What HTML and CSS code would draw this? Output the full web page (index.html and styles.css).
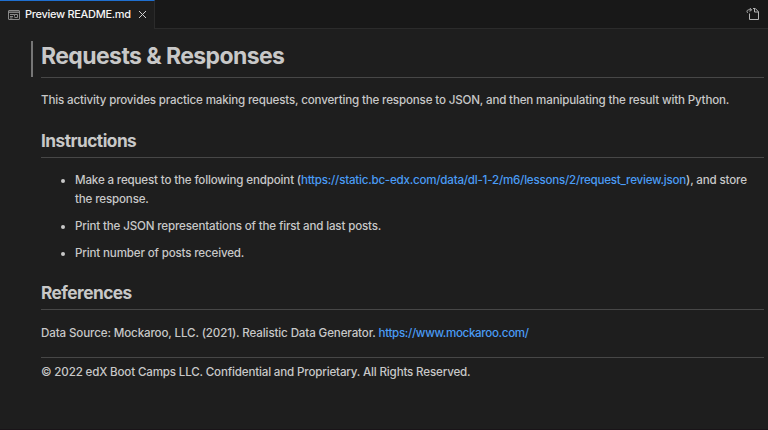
FILE: index.html
```html
<!DOCTYPE html>
<html lang="en">
<head>
<meta charset="utf-8">
<title>Preview README.md</title>
<link rel="stylesheet" href="styles.css">
</head>
<body>
<header class="tabs">
  <div class="tab">
    <svg class="tab-icon" width="12" height="12" viewBox="0 0 12 12" fill="none" stroke="#8a8a8a"><rect x=".5" y="1.5" width="11" height="9" rx=".5"/><path d="M1 3.2h10" stroke-width="1.4"/><path d="M2 5.5H6.5M2 7.5H5M2 9H4.5M6.5 7.5V5.5H9.5V8.5H6.5"/></svg>
    <span class="tab-title">Preview README.md</span>
    <svg class="close" width="9" height="9" viewBox="0 0 9 9" fill="none" stroke="#d0d0d0"><path d="M1 1l7 7M8 1L1 8"/></svg>
  </div>
  <div class="actions">
    <svg width="14" height="14" viewBox="0 0 14 14" fill="none" stroke="#b4b4b4"><path d="M3.5 6.5V12.5H12.5V4.8L9.3 1.5H7M8.5 1.5V5H12.5M1.8 6C.2 4.2 1.2 2.8 3 2.8H5.4M3.8 1L5.6 2.8 3.8 4.6"/></svg>
  </div>
</header>
<main class="preview">
  <h1>Requests &amp; Responses</h1>
  <p class="intro">This activity provides practice making requests, converting the response to JSON, and then manipulating the result with Python.</p>
  <h2>Instructions</h2>
  <ul>
    <li>Make a request to the following endpoint (<a>https://static.bc-edx.com/data/dl-1-2/m6/lessons/2/request_review.json</a>), and store<br>the response.</li>
    <li>Print the JSON representations of the first and last posts.</li>
    <li>Print number of posts received.</li>
  </ul>
  <h2 class="references">References</h2>
  <p class="source">Data Source: Mockaroo, LLC. (2021). Realistic Data Generator. <a>https://www.mockaroo.com/</a></p>
  <hr>
  <p class="copyright">© 2022 edX Boot Camps LLC. Confidential and Proprietary. All Rights Reserved.</p>
</main>
</body>
</html>
```
FILE: styles.css
```css
* { box-sizing: border-box; }
body {
  margin: 0;
  height: 430px;
  overflow: hidden;
  background: #1e1e1e;
  border-bottom: 1px solid #191418;
  color: #c8c8c8;
  font: 500 11.6px/19px Inter, sans-serif;
  letter-spacing: -0.165px;
}
.tabs {
  display: flex;
  height: 29px;
  background: #181818;
}
.tab {
  display: flex;
  align-items: center;
  width: 155px;
  padding: 0 0 1px 8px;
  background: #1e1e1e;
  border-top: 1px solid #1f6fd0;
  border-right: 1px solid #2b2b2b;
}
.tab-title {
  width: 106px;
  margin: 0 7px 0 5px;
  color: #f5f5f5;
  font-size: 11px;
  letter-spacing: -0.3px;
  white-space: nowrap;
}
.actions {
  flex: 1;
  display: flex;
  justify-content: flex-end;
  align-items: center;
  padding-right: 8px;
  border-bottom: 1px solid #2b2b2b;
}
.preview { padding: 12px 4px 0 41px; white-space: nowrap; }
h1, h2, p, ul { margin: 0; }
h1 {
  height: 36px;
  margin-left: -10px;
  padding-left: 8px;
  border-left: 2px solid #767676;
  font-size: 23px;
  font-weight: 650;
  line-height: 30px;
  letter-spacing: -0.59px;
}
.intro { padding-top: 13px; border-top: 1px solid #474747; }
h2 {
  height: 28px;
  margin-top: 20px;
  border-bottom: 1px solid #474747;
  font-size: 17.3px;
  font-weight: 650;
  line-height: 22px;
  letter-spacing: -0.53px;
}
ul { margin-top: 13px; padding: 0; list-style: none; }
li { position: relative; padding-left: 34px; margin-bottom: 8px; }
li::before {
  content: "";
  position: absolute;
  left: 20px;
  top: 8px;
  width: 4px;
  height: 4px;
  border-radius: 50%;
  background: #c8c8c8;
}
.references { margin-top: 19px; }
a { color: #4a9cf5; letter-spacing: -0.23px; }
.source { margin-top: 14px; letter-spacing: -0.13px; }
.source a { letter-spacing: -0.34px; }
hr { margin: 14px 0 5px; border: 0; border-top: 1px solid #474747; }
```
